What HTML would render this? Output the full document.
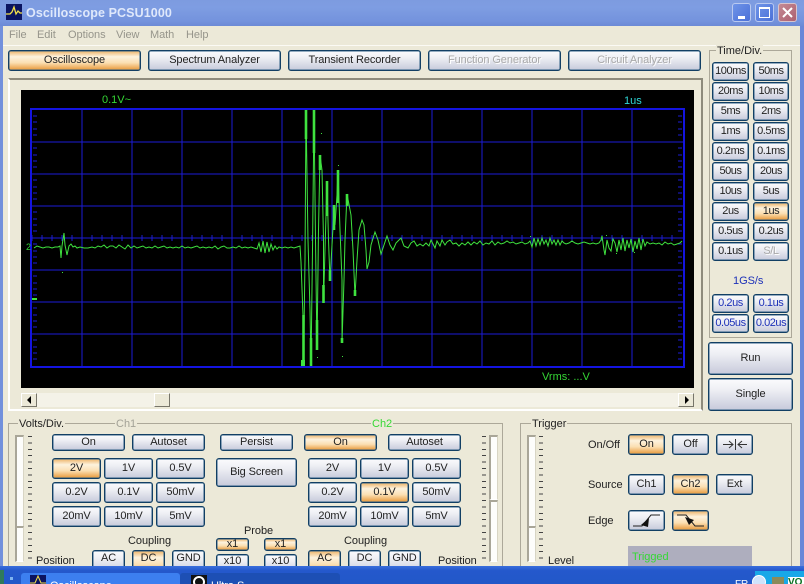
<!DOCTYPE html>
<html><head><meta charset="utf-8"><style>
*{box-sizing:border-box}
html,body{margin:0;padding:0;width:804px;height:584px;overflow:hidden;background:#ece9d8;font-family:"Liberation Sans",sans-serif;font-size:11px;color:#222}
#w{position:absolute;left:0;top:0;width:804px;height:584px;overflow:hidden;background:#ece9d8}
.a{position:absolute}
.b{position:absolute;display:flex;align-items:center;justify-content:center;border:1px solid #123f64;box-shadow:inset 0 0 0 .5px #2f5f85;border-radius:3px;background:linear-gradient(#fbfbfd 0,#eeeff4 35%,#c7cadb 100%);color:#222;white-space:nowrap;font-size:11px;letter-spacing:-.1px;line-height:1}
.o{background:linear-gradient(#eeb468 0,#fdf2de 30%,#fbdfb2 62%,#e8993a 100%)}
.d{color:#a9a9a9;text-shadow:1px 1px 0 #fff}
.t{position:absolute;white-space:nowrap;line-height:14px;letter-spacing:-.05px}
.s{position:absolute;background:#fdfdfb;border-left:2px solid #a9a698;border-top:2px solid #a9a698;border-right:1px solid #d8d5c4;border-bottom:1px solid #fff;width:9px}
.k{position:absolute;width:4px;background:repeating-linear-gradient(#444 0,#444 1px,transparent 1px,transparent 6.4px)}
.g{position:absolute;border:1px solid #aca899}
.l{position:absolute;background:#ece9d8;line-height:14px;padding:0 1px;white-space:nowrap}
.bl{color:#1c30b8}
.tm .b{letter-spacing:-.45px}
</style></head><body><div id="w">
<!-- window frame -->
<div class="a" style="left:0;top:0;width:804px;height:26px;background:linear-gradient(#7d9be0,#7e9de2 30%,#7493dd 80%,#6c8ad6)"></div>
<div class="a" style="left:0;top:26px;width:3px;height:540px;background:#7290dc"></div>
<div class="a" style="left:800px;top:26px;width:4px;height:540px;background:#6a87d8"></div>
<svg class="a" style="left:6px;top:4px" width="16" height="16"><rect width="16" height="16" fill="#0b1460"/><path d="M0 10H4L6 8 8 3 10 10 12 7 14 9H16" stroke="#f4e04a" stroke-width="1.3" fill="none"/></svg>
<div class="t" style="left:26px;top:5px;font-size:12.500px;font-weight:bold;color:#dfe8fb;letter-spacing:.1px;line-height:16px">Oscilloscope PCSU1000</div>
<div class="a" style="left:732px;top:3px;width:19px;height:19px;border:1px solid #b9c9f0;border-radius:3px;background:linear-gradient(135deg,#6f94e8,#4a70d8)"><div class="a" style="left:5px;top:12px;width:7px;height:3px;background:#fff"></div></div>
<div class="a" style="left:755px;top:3px;width:19px;height:19px;border:1px solid #b9c9f0;border-radius:3px;background:linear-gradient(135deg,#6f94e8,#4a70d8)"><div class="a" style="left:3px;top:3px;width:11px;height:11px;border:1px solid #fff;border-top-width:2px"></div></div>
<div class="a" style="left:778px;top:3px;width:19px;height:19px;border:1px solid #d8c4cc;border-radius:3px;background:linear-gradient(135deg,#c48a94,#ad6070)"><svg class="a" style="left:0;top:0" width="17" height="17"><path d="M4 4L13 13M13 4L4 13" stroke="#fff" stroke-width="2"/></svg></div>
<!-- menu -->
<div class="t" style="left:9px;top:28px;color:#96958b">File</div>
<div class="t" style="left:37px;top:28px;color:#96958b">Edit</div>
<div class="t" style="left:68px;top:28px;color:#96958b">Options</div>
<div class="t" style="left:116px;top:28px;color:#96958b">View</div>
<div class="t" style="left:150px;top:28px;color:#96958b">Math</div>
<div class="t" style="left:186px;top:28px;color:#96958b">Help</div>
<div class="a" style="left:3px;top:45px;width:797px;height:1px;background:#fbfaf4"></div>
<!-- tabs -->
<div class="b o" style="left:8px;top:50px;width:133px;height:21px">Oscilloscope</div>
<div class="b" style="left:148px;top:50px;width:133px;height:21px">Spectrum Analyzer</div>
<div class="b" style="left:288px;top:50px;width:133px;height:21px">Transient Recorder</div>
<div class="b d" style="left:428px;top:50px;width:133px;height:21px">Function Generator</div>
<div class="b d" style="left:568px;top:50px;width:133px;height:21px">Circuit Analyzer</div>
<!-- scope frame -->
<div class="a" style="left:8px;top:78px;width:695px;height:333px;border:2px solid;border-color:#8e8b7c #8e8b7c #fff #fff"></div>
<svg class="a" style="left:21px;top:90px" width="673" height="298" viewBox="21 90 673 298">
<rect x="21" y="90" width="673" height="298" fill="#000"/>
<g stroke="#1c1cd6" stroke-width="1" shape-rendering="crispEdges">
<path d="M82 110V366M132 110V366M182 110V366M232 110V366M282 110V366M332 110V366M382 110V366M432 110V366M482 110V366M532 110V366M582 110V366M632 110V366"/>
<path d="M32 142H683M32 174H683M32 206H683M32 238H683M32 270H683M32 302H683M32 334H683"/>
<path d="M32 235V241M42 235V241M52 235V241M62 235V241M72 235V241M92 235V241M102 235V241M112 235V241M122 235V241M142 235V241M152 235V241M162 235V241M172 235V241M192 235V241M202 235V241M212 235V241M222 235V241M242 235V241M252 235V241M262 235V241M272 235V241M292 235V241M302 235V241M312 235V241M322 235V241M342 235V241M352 235V241M362 235V241M372 235V241M392 235V241M402 235V241M412 235V241M422 235V241M442 235V241M452 235V241M462 235V241M472 235V241M492 235V241M502 235V241M512 235V241M522 235V241M542 235V241M552 235V241M562 235V241M572 235V241M592 235V241M602 235V241M612 235V241M622 235V241M642 235V241M652 235V241M662 235V241M672 235V241"/>
<path d="M33 116H37M33 122H37M33 129H37M33 135H37M33 148H37M33 155H37M33 161H37M33 167H37M33 180H37M33 187H37M33 193H37M33 199H37M33 212H37M33 219H37M33 225H37M33 231H37M33 244H37M33 251H37M33 257H37M33 263H37M33 276H37M33 283H37M33 289H37M33 295H37M33 308H37M33 315H37M33 321H37M33 327H37M33 340H37M33 347H37M33 353H37M33 359H37"/>
<path d="M678 116H682M678 122H682M678 129H682M678 135H682M678 148H682M678 155H682M678 161H682M678 167H682M678 180H682M678 187H682M678 193H682M678 199H682M678 212H682M678 219H682M678 225H682M678 231H682M678 244H682M678 251H682M678 257H682M678 263H682M678 276H682M678 283H682M678 289H682M678 295H682M678 308H682M678 315H682M678 321H682M678 327H682M678 340H682M678 347H682M678 353H682M678 359H682"/>
</g>
<rect x="31" y="109" width="653" height="258" fill="none" stroke="#1414e0" stroke-width="2"/>
<path fill="none" stroke="#3fe23f" stroke-width="1" d="M34 248L37 246 40 247 43 248 46 247 49 247 52 248 55 247 58 247 60 246 61 258 62 246 64 233 65 245 67 255 69 246 71 244 73 247 75 246 77 248 80 247 84 248 88 248 92 247 95 248 98 246 101 247 104 245 107 248 110 246 113 246 116 248 119 245 122 247 125 249 128 245 131 248 134 246 137 248 140 247 143 246 146 248 149 247 152 248 155 246 158 248 161 247 164 246 167 248 170 247 173 248 176 247 179 248 182 246 185 248 188 247 191 248 194 247 197 246 200 248 203 247 206 248 209 247 212 248 215 246 218 249 221 247 224 246 227 248 230 248 233 247 236 248 239 246 242 248 245 247 248 248 251 247 254 248 257 249 259 243 261 252 263 241 265 253 267 242 269 252 271 244 273 250 275 246 277 249 279 247 282 248 285 247 288 248 291 247 294 248 297 247 300 246 301 262 303 316 303.5 366 305 260 306 110 308 240 310 310 311 366 312.5 250 314 110 315.5 240 317 350 318.5 230 320 155 322 170 323.5 240 323.5 303 325 250 327 181 328.5 240 330 281 332 245 334 210 335 225 337 195 338 170 340 230 342 280 342 343 344 280 345 240 347 194 351 215 353 250 355 296 357 260 359 230 362 220 364 225 366 250 367 269 369 262 371 245 375 232 378 240 381 254 384 245 387 236 390 245 393 250 396 243 399 240 401 238 404 246 408 248 411 243 414 241 417 246 420 244 423 246 426 243 429 246 431 240 433 244 435 248 437 241 440 246 442 240 445 245 447 242 450 240 453 244 456 243 459 246 462 243 465 245 468 242 471 245 474 242 477 244 480 241 483 245 486 243 489 244 492 241 495 245 498 242 501 244 504 243 507 241 510 243 513 242 516 244 519 243 522 242 525 244 528 243 530 241 532 247 534 238 536 246 538 239 540 245 542 238 544 244 546 240 548 246 550 238 552 244 554 240 556 245 558 240 560 245 562 241 564 243 566 244 569 243 572 241 575 243 578 244 581 243 584 242 587 243 590 244 593 243 596 244 599 243 601 240 602 236 604 250 605 255 607 240 609 248 611 251 613 239 615 243 617 252 619 240 621 250 623 238 625 251 627 240 629 248 631 239 633 252 635 241 637 249 639 238 641 250 643 239 645 246 647 242 650 244 653 243 656 244 659 243 662 245 665 242 668 244 671 243 674 245 677 244 680 243 682 241"/>
<g stroke="#3fe23f" fill="none">
<path stroke-width="2.6" d="M306 110V139M314 110V153M320 155V170M327 181V216M334 205V230M338 170V203M347 194V206M303.5 315V366M311 338V366M317 320V350M323.5 285V303M330 270V281M342 338V343M355 290V296"/>
</g>
<rect x="301" y="360" width="4" height="6" fill="#3fe23f"/>
<rect x="32" y="298" width="5" height="2" fill="#3fe23f"/>
<g fill="#3fe23f"><rect x="321" y="133" width="1" height="1"/><rect x="320" y="156" width="1" height="1"/><rect x="62" y="272" width="1" height="1"/><rect x="342" y="356" width="1" height="1"/><rect x="317" y="357" width="1" height="1"/><rect x="338" y="165" width="1" height="1"/><rect x="606" y="235" width="1" height="1"/><rect x="530" y="236" width="1" height="1"/><rect x="616" y="253" width="1" height="1"/><rect x="634" y="252" width="1" height="1"/></g>
<text x="102" y="103" fill="#35d835" font-family="Liberation Sans" font-size="11">0.1V~</text>
<text x="624" y="104" fill="#2fd8d8" font-family="Liberation Sans" font-size="11">1us</text>
<text x="26" y="250" fill="#35d835" font-family="Liberation Sans" font-size="9">2</text>
<text x="542" y="380" fill="#35d835" font-family="Liberation Sans" font-size="11">Vrms: ...V</text>
</svg>
<!-- scrollbar -->
<div class="a" style="left:21px;top:393px;width:673px;height:14px;background:#f4f2e8"></div>
<div class="a" style="left:21px;top:393px;width:16px;height:14px;background:#ece9d8;border:1px solid;border-color:#fff #77756a #77756a #fff"><svg class="a" style="left:4px;top:2px" width="6" height="8"><path d="M5 0V8L1 4Z" fill="#000"/></svg></div>
<div class="a" style="left:154px;top:393px;width:16px;height:14px;background:#ece9d8;border:1px solid;border-color:#fff #77756a #77756a #fff"></div>
<div class="a" style="left:678px;top:393px;width:16px;height:14px;background:#ece9d8;border:1px solid;border-color:#fff #77756a #77756a #fff"><svg class="a" style="left:5px;top:2px" width="6" height="8"><path d="M1 0V8L5 4Z" fill="#000"/></svg></div>
<!-- time/div -->
<div class="g" style="left:709px;top:50px;width:83px;height:288px"></div>
<div class="l" style="left:716px;top:44px">Time/Div.</div>
<div class="tm">
<div class="b" style="left:712px;top:62px;width:37px;height:19px">100ms</div><div class="b" style="left:753px;top:62px;width:36px;height:19px">50ms</div>
<div class="b" style="left:712px;top:82px;width:37px;height:19px">20ms</div><div class="b" style="left:753px;top:82px;width:36px;height:19px">10ms</div>
<div class="b" style="left:712px;top:102px;width:37px;height:19px">5ms</div><div class="b" style="left:753px;top:102px;width:36px;height:19px">2ms</div>
<div class="b" style="left:712px;top:122px;width:37px;height:19px">1ms</div><div class="b" style="left:753px;top:122px;width:36px;height:19px">0.5ms</div>
<div class="b" style="left:712px;top:142px;width:37px;height:19px">0.2ms</div><div class="b" style="left:753px;top:142px;width:36px;height:19px">0.1ms</div>
<div class="b" style="left:712px;top:162px;width:37px;height:19px">50us</div><div class="b" style="left:753px;top:162px;width:36px;height:19px">20us</div>
<div class="b" style="left:712px;top:182px;width:37px;height:19px">10us</div><div class="b" style="left:753px;top:182px;width:36px;height:19px">5us</div>
<div class="b" style="left:712px;top:202px;width:37px;height:19px">2us</div><div class="b o" style="left:753px;top:202px;width:36px;height:19px">1us</div>
<div class="b" style="left:712px;top:222px;width:37px;height:19px">0.5us</div><div class="b" style="left:753px;top:222px;width:36px;height:19px">0.2us</div>
<div class="b" style="left:712px;top:242px;width:37px;height:19px">0.1us</div><div class="b d" style="left:753px;top:242px;width:36px;height:19px">S/L</div>
<div class="b bl" style="left:712px;top:294px;width:37px;height:19px">0.2us</div><div class="b bl" style="left:753px;top:294px;width:36px;height:19px">0.1us</div>
<div class="b bl" style="left:712px;top:314px;width:37px;height:19px">0.05us</div><div class="b bl" style="left:753px;top:314px;width:36px;height:19px">0.02us</div>
</div>
<div class="t bl" style="left:733px;top:274px">1GS/s</div>
<div class="b" style="left:708px;top:342px;width:85px;height:33px">Run</div>
<div class="b" style="left:708px;top:378px;width:85px;height:33px">Single</div>
<!-- volts group -->
<div class="g" style="left:8px;top:423px;width:495px;height:170px"></div>
<div class="l" style="left:18px;top:417px">Volts/Div.</div>
<div class="l" style="left:115px;top:417px;color:#a3a297">Ch1</div>
<div class="l" style="left:371px;top:417px;color:#35d835">Ch2</div>
<div class="s" style="left:15px;top:435px;height:92px"></div><div class="s" style="left:15px;top:526px;height:36px"></div>
<div class="k" style="left:28px;top:436px;height:126px"></div>
<div class="s" style="left:489px;top:435px;height:65px"></div><div class="s" style="left:489px;top:500px;height:62px"></div>
<div class="k" style="left:482px;top:436px;height:126px"></div>
<div class="b" style="left:52px;top:434px;width:73px;height:17px">On</div>
<div class="b" style="left:132px;top:434px;width:73px;height:17px">Autoset</div>
<div class="b" style="left:220px;top:434px;width:73px;height:17px">Persist</div>
<div class="b o" style="left:304px;top:434px;width:73px;height:17px">On</div>
<div class="b" style="left:388px;top:434px;width:73px;height:17px">Autoset</div>
<div class="b" style="left:216px;top:458px;width:81px;height:29px">Big Screen</div>
<div class="b o" style="left:52px;top:458px;width:49px;height:21px">2V</div><div class="b" style="left:104px;top:458px;width:49px;height:21px">1V</div><div class="b" style="left:156px;top:458px;width:49px;height:21px">0.5V</div>
<div class="b" style="left:52px;top:482px;width:49px;height:21px">0.2V</div><div class="b" style="left:104px;top:482px;width:49px;height:21px">0.1V</div><div class="b" style="left:156px;top:482px;width:49px;height:21px">50mV</div>
<div class="b" style="left:52px;top:506px;width:49px;height:21px">20mV</div><div class="b" style="left:104px;top:506px;width:49px;height:21px">10mV</div><div class="b" style="left:156px;top:506px;width:49px;height:21px">5mV</div>
<div class="b" style="left:308px;top:458px;width:49px;height:21px">2V</div><div class="b" style="left:360px;top:458px;width:49px;height:21px">1V</div><div class="b" style="left:412px;top:458px;width:49px;height:21px">0.5V</div>
<div class="b" style="left:308px;top:482px;width:49px;height:21px">0.2V</div><div class="b o" style="left:360px;top:482px;width:49px;height:21px">0.1V</div><div class="b" style="left:412px;top:482px;width:49px;height:21px">50mV</div>
<div class="b" style="left:308px;top:506px;width:49px;height:21px">20mV</div><div class="b" style="left:360px;top:506px;width:49px;height:21px">10mV</div><div class="b" style="left:412px;top:506px;width:49px;height:21px">5mV</div>
<div class="t" style="left:244px;top:524px">Probe</div>
<div class="b o" style="left:216px;top:538px;width:33px;height:13px">x1</div><div class="b o" style="left:264px;top:538px;width:33px;height:13px">x1</div>
<div class="b" style="left:216px;top:554px;width:33px;height:20px;align-items:flex-start;padding-top:1px">x10</div><div class="b" style="left:264px;top:554px;width:33px;height:20px;align-items:flex-start;padding-top:1px">x10</div>
<div class="t" style="left:128px;top:534px">Coupling</div>
<div class="t" style="left:344px;top:534px">Coupling</div>
<div class="t" style="left:36px;top:554px">Position</div>
<div class="t" style="left:438px;top:554px">Position</div>
<div class="b" style="left:92px;top:550px;width:33px;height:24px;align-items:flex-start;padding-top:2px">AC</div><div class="b o" style="left:132px;top:550px;width:33px;height:24px;align-items:flex-start;padding-top:2px">DC</div><div class="b" style="left:172px;top:550px;width:33px;height:24px;align-items:flex-start;padding-top:2px">GND</div>
<div class="b o" style="left:308px;top:550px;width:33px;height:24px;align-items:flex-start;padding-top:2px">AC</div><div class="b" style="left:348px;top:550px;width:33px;height:24px;align-items:flex-start;padding-top:2px">DC</div><div class="b" style="left:388px;top:550px;width:33px;height:24px;align-items:flex-start;padding-top:2px">GND</div>
<!-- trigger -->
<div class="g" style="left:520px;top:423px;width:272px;height:170px"></div>
<div class="l" style="left:531px;top:417px">Trigger</div>
<div class="s" style="left:527px;top:435px;height:92px"></div><div class="s" style="left:527px;top:526px;height:36px"></div>
<div class="k" style="left:539px;top:436px;height:126px"></div>
<div class="t" style="left:548px;top:554px">Level</div>
<div class="t" style="left:588px;top:438px">On/Off</div>
<div class="t" style="left:588px;top:478px">Source</div>
<div class="t" style="left:588px;top:514px">Edge</div>
<div class="b o" style="left:628px;top:434px;width:37px;height:21px">On</div><div class="b" style="left:672px;top:434px;width:37px;height:21px">Off</div>
<div class="b" style="left:716px;top:434px;width:37px;height:21px"><svg width="30" height="13"><path d="M3 6.500H13M9 3L13 6.500 9 10M15.500 1V12M27 6.500H18M22 3L18 6.500 22 10" stroke="#333" fill="none"/></svg></div>
<div class="b" style="left:628px;top:474px;width:37px;height:21px">Ch1</div><div class="b o" style="left:672px;top:474px;width:37px;height:21px">Ch2</div><div class="b" style="left:716px;top:474px;width:37px;height:21px">Ext</div>
<div class="b" style="left:628px;top:510px;width:37px;height:21px"><svg width="33" height="17"><path d="M3 14H12L21 3H30" stroke="#222" fill="none"/><path d="M11 13L19 6 18 15Z" fill="#111"/></svg></div>
<div class="b o" style="left:672px;top:510px;width:37px;height:21px"><svg width="33" height="17"><path d="M3 3H12L21 14H30" stroke="#222" fill="none"/><path d="M11 5L20 8 15 13Z" fill="#111"/></svg></div>
<div class="a" style="left:628px;top:546px;width:124px;height:24px;background:#aeaebe"></div>
<div class="t" style="left:632px;top:550px;color:#35d835">Trigged</div>
<!-- taskbar -->
<div class="a" style="left:0;top:566px;width:804px;height:18px;background:linear-gradient(#3a6fdc,#2458cc 25%,#2258c8)"></div>
<div class="a" style="left:0;top:570px;width:4px;height:14px;background:#2f7a5a"></div>
<div class="a" style="left:10px;top:577px;width:3px;height:3px;background:#7fb4f0"></div>
<div class="a" style="left:21px;top:573px;width:159px;height:11px;background:#3c7ff0;border-radius:3px 3px 0 0"></div>
<div class="a" style="left:180px;top:573px;width:160px;height:11px;background:#1d4fb4;border-radius:3px 3px 0 0"></div>
<svg class="a" style="left:30px;top:575px" width="16" height="9"><rect width="16" height="9" fill="#0b1460"/><path d="M0 8L5 8 8 1 11 8 16 8" stroke="#f4e04a" fill="none"/></svg>
<div class="t" style="left:50px;top:579px;color:#fff">Oscilloscope</div>
<svg class="a" style="left:191px;top:575px" width="16" height="9"><rect width="16" height="9" fill="#111"/><circle cx="8" cy="7" r="5" fill="none" stroke="#fff" stroke-width="2"/></svg>
<div class="t" style="left:211px;top:579px;color:#fff">Ultra S</div>
<div class="a" style="left:755px;top:571px;width:49px;height:13px;background:#18a8e8"></div>
<div class="t" style="left:735px;top:578px;color:#fff;font-size:10px">FR</div>
<div class="a" style="left:752px;top:575px;width:14px;height:14px;border-radius:7px;background:#cfe3fb;border:1px solid #fff"></div>
<div class="a" style="left:772px;top:577px;width:12px;height:7px;background:#8b8a5a"></div>
<div class="a" style="left:788px;top:577px;width:16px;height:7px;background:#fff;color:#0a7020;font-size:10px;line-height:12px;font-weight:bold;overflow:hidden">VO</div>
</div></body></html>
